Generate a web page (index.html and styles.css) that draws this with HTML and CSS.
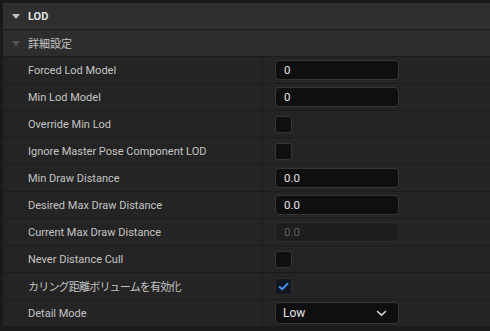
FILE: index.html
```html
<!DOCTYPE html>
<html lang="ja">
<head>
  <meta charset="UTF-8"/>
  <title>LOD Details</title>
  <link rel="stylesheet" href="styles.css">
</head>
<body>
  <div class="panel">
    <!-- Category header -->
    <div class="head head-main">
      <span class="tri"></span>
      <span class="head-title">LOD</span>
    </div>
    <!-- Sub group -->
    <div class="head head-sub">
      <span class="tri tri-dim"></span>
      <span class="head-sub-title">詳細設定</span>
    </div>

    <!-- Property rows -->
    <div class="row">
      <div class="name">Forced Lod Model</div>
      <div class="value"><div class="field">0</div></div>
    </div>
    <div class="row">
      <div class="name">Min Lod Model</div>
      <div class="value"><div class="field">0</div></div>
    </div>
    <div class="row">
      <div class="name">Override Min Lod</div>
      <div class="value"><div class="check"></div></div>
    </div>
    <div class="row">
      <div class="name">Ignore Master Pose Component LOD</div>
      <div class="value"><div class="check"></div></div>
    </div>
    <div class="row">
      <div class="name">Min Draw Distance</div>
      <div class="value"><div class="field">0.0</div></div>
    </div>
    <div class="row">
      <div class="name">Desired Max Draw Distance</div>
      <div class="value"><div class="field">0.0</div></div>
    </div>
    <div class="row">
      <div class="name">Current Max Draw Distance</div>
      <div class="value"><div class="field disabled">0.0</div></div>
    </div>
    <div class="row">
      <div class="name">Never Distance Cull</div>
      <div class="value"><div class="check"></div></div>
    </div>
    <div class="row">
      <div class="name name-ja">カリング距離ボリュームを有効化</div>
      <div class="value">
        <div class="check checked">
          <svg width="11" height="9" viewBox="0 0 11 9"><path d="M1.5 4.8 L4.2 7.2 L9.5 1.8" fill="none" stroke="#3f8ee6" stroke-width="2" stroke-linecap="round" stroke-linejoin="round"/></svg>
        </div>
      </div>
    </div>
    <div class="row">
      <div class="name">Detail Mode</div>
      <div class="value">
        <div class="field select">
          <span>Low</span>
          <svg width="11" height="7" viewBox="0 0 11 7"><path d="M1.5 1.5 L5.5 5.2 L9.5 1.5" fill="none" stroke="#d8d8d8" stroke-width="1.6" stroke-linecap="round" stroke-linejoin="round"/></svg>
        </div>
      </div>
    </div>
  </div>
</body>
</html>
```

FILE: styles.css
```css
/* base */
* { box-sizing: border-box; margin: 0; padding: 0; }
body { background: #1a1a1a; font-family: Roboto, "Noto Sans CJK JP", sans-serif; font-size: 11px; color: #c4c4c4; }

/* panel */
.panel { padding: 3px 0 0 3px; }

/* headers */
.head { height: 27px; display: flex; align-items: center; border-bottom: 1px solid #1b1b1b; padding-left: 9px; }
.head-main { background: #2f2f2f; }
.head-sub { background: #2d2d2d; }
.tri { width: 0; height: 0; border-left: 4px solid transparent; border-right: 4px solid transparent; border-top: 5px solid #c4c4c4; margin-right: 8px; }
.tri-dim { border-top-color: #555; }
.head-title { font-weight: bold; color: #e2e2e2; }
.head-sub-title { color: #c4c4c4; }

/* property rows */
.row { height: 27px; display: flex; background: #242424; border-bottom: 1px solid #1b1b1b; }
.name { width: 259px; padding-left: 25px; display: flex; align-items: center; white-space: nowrap; }
.name-ja { letter-spacing: -0.8px; }
.value { flex: 1; border-left: 1px solid #1b1b1b; padding-left: 12px; display: flex; align-items: center; }

/* text field */
.field { width: 124px; height: 20px; background: #0f0f0f; border: 1px solid #363636; border-radius: 4px; padding-left: 8px; display: flex; align-items: center; color: #e4e4e4; font-size: 11.5px; }
.field.disabled { background: #1d1d1d; border-color: #2c2c2c; color: #5e5e5e; }
.field.select { height: 22px; justify-content: space-between; padding: 0 11px 0 7px; font-size: 12px; }

/* checkbox */
.check { width: 17px; height: 17px; background: #0f0f0f; border: 1px solid #363636; border-radius: 3px; display: flex; align-items: center; justify-content: center; }
.check.checked { background: #111722; border-color: #2f2a26; }
```
